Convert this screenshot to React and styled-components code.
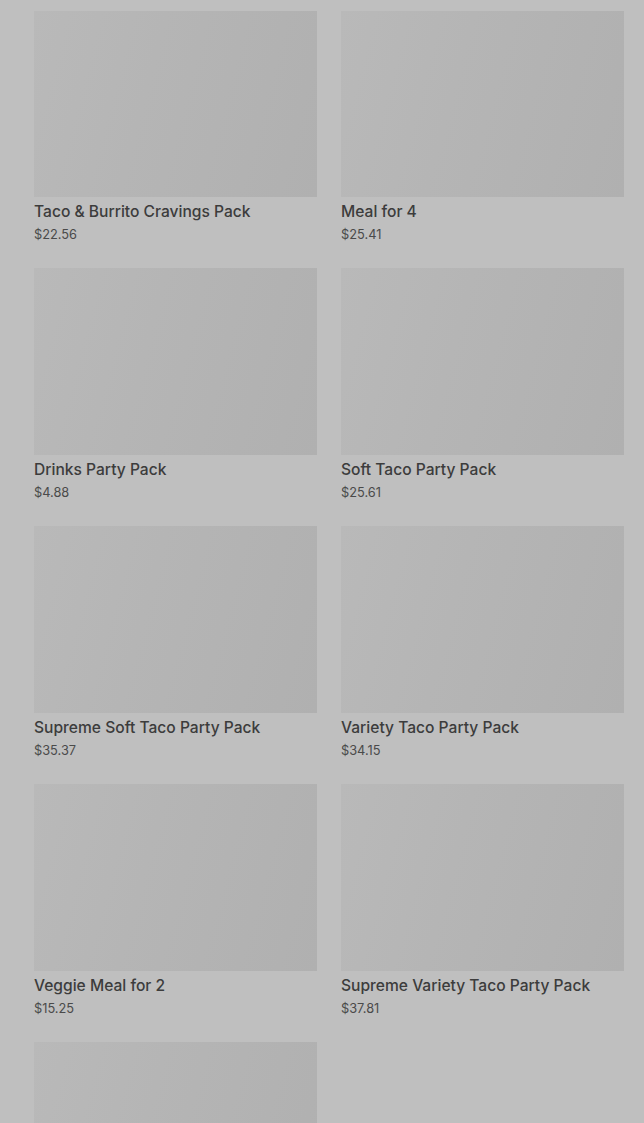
import React from "react";
import styled, { createGlobalStyle } from "styled-components";

const Global = createGlobalStyle`
  html, body { margin: 0; padding: 0; background: #bfbfbf; }
  body { font-family: Inter, "Noto Sans", Arial, sans-serif; }
`;

const Grid = styled.div`
  display: grid;
  grid-template-columns: 283px 283px;
  column-gap: 24px;
  row-gap: 25px;
  padding: 10.5px 20px 0 34px;
  height: 1123px;
  overflow: hidden;
  box-sizing: border-box;
`;

const Card = styled.div`
  display: flex;
  flex-direction: column;
  height: 232.75px;
`;

const Thumb = styled.div`
  flex: none;
  height: 186.75px;
  background: linear-gradient(105deg, #b9b9b9 0%, #b5b5b5 40%, #b0b0b0 100%);
`;

const Title = styled.div`
  margin-top: 4px;
  font-size: 15.6px;
  line-height: 22px;
  font-weight: 500;
  color: #3c3c3c;
`;

const Price = styled.div`
  margin-top: 2px;
  font-size: 12.8px;
  line-height: 20px;
  color: #4a4a4a;
`;

const items = [
  ["Taco & Burrito Cravings Pack", "$22.56"],
  ["Meal for 4", "$25.41"],
  ["Drinks Party Pack", "$4.88"],
  ["Soft Taco Party Pack", "$25.61"],
  ["Supreme Soft Taco Party Pack", "$35.37"],
  ["Variety Taco Party Pack", "$34.15"],
  ["Veggie Meal for 2", "$15.25"],
  ["Supreme Variety Taco Party Pack", "$37.81"],
  ["", ""],
];

export default function App() {
  return (
    <>
      <Global />
      <Grid>
        {items.map(([t, p], i) => (
          <Card key={i}>
            <Thumb />
            <Title>{t}</Title>
            <Price>{p}</Price>
          </Card>
        ))}
      </Grid>
    </>
  );
}
